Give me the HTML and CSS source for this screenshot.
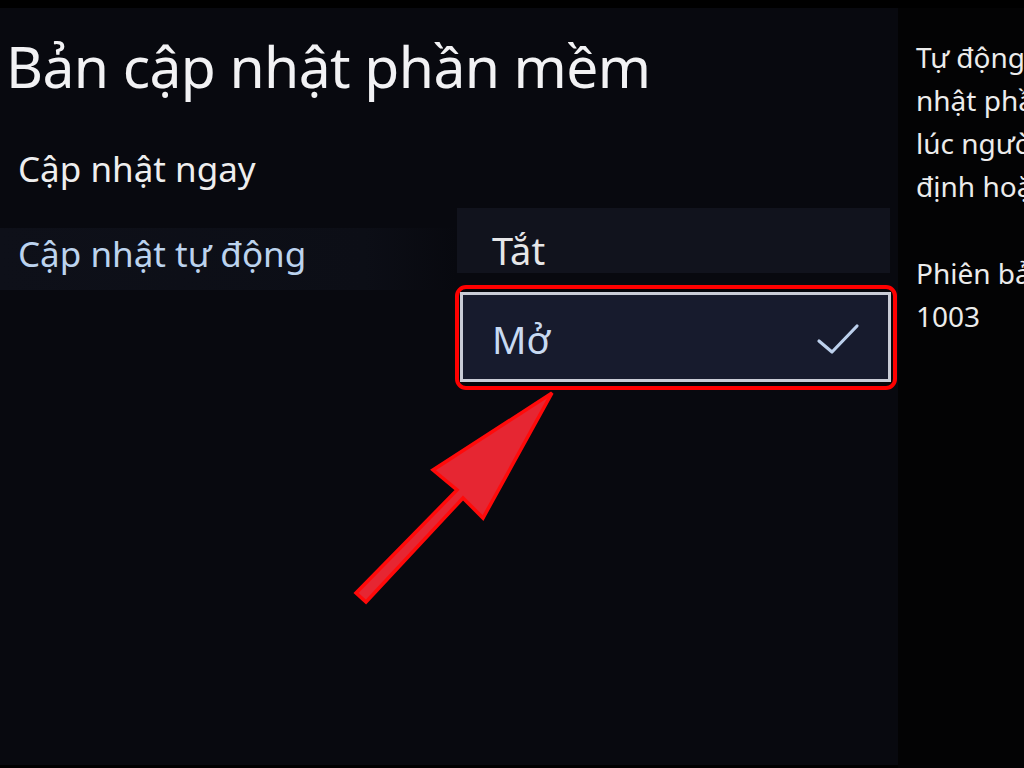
FILE: index.html
```html
<!DOCTYPE html>
<html lang="vi">
<head>
<meta charset="utf-8">
<title>Bản cập nhật phần mềm</title>
<link rel="stylesheet" href="styles.css">
</head>
<body>
<div class="screen">
  <main class="main">
    <h1 class="title">Bản cập nhật phần mềm</h1>
    <div class="content">
      <ul class="menu">
        <li class="menu-item">Cập nhật ngay</li>
        <li class="menu-item menu-item--active">Cập nhật tự động</li>
      </ul>
      <div class="options">
        <div class="option">Tắt</div>
        <div class="option-frame">
          <div class="option option--selected">
            <span class="option-label">Mở</span>
            <svg class="check" width="44" height="32" viewBox="0 0 44 32"><path d="M3 18 L16 29 L41 3" fill="none" stroke="#bcd0ec" stroke-width="3.2" stroke-linecap="round" stroke-linejoin="round"/></svg>
          </div>
        </div>
      </div>
    </div>
  </main>
  <aside class="side">
    <p class="side-text">Tự động cập<br>nhật phần mềm lên<br>lúc người dùng không<br>định hoặc tắt TV.</p>
    <p class="side-text side-version">Phiên bản hiện tại:<br>1003</p>
  </aside>
</div>
<svg class="arrow" width="1024" height="768" viewBox="0 0 1024 768">
  <polygon points="552,393 433,470 457,490 356,593 366,602 463,498 483,518" fill="#e62632" stroke="#ff0a0a" stroke-width="3.5" stroke-linejoin="miter"/>
</svg>
</body>
</html>
```
FILE: styles.css
```css
html, body {
  margin: 0;
  padding: 0;
  background: #000;
}
body {
  width: 1024px;
  height: 768px;
  overflow: hidden;
  position: relative;
  font-family: "Noto Sans", "Open Sans", sans-serif;
}
.screen {
  display: flex;
  height: 768px;
  padding-top: 8px;
  box-sizing: border-box;
}
.main {
  width: 898px;
  height: 757px;
  background: #08090f;
  flex: none;
}
.title {
  margin: 0;
  padding: 22px 0 0 6px;
  font-weight: 400;
  font-size: 57px;
  line-height: 72px;
  color: #f2f2f4;
  letter-spacing: -0.6px;
}
.content {
  display: grid;
  grid-template-columns: 457px 433px;
}
.menu {
  list-style: none;
  margin: 0;
  padding: 41px 0 0 0;
}
.menu-item {
  height: 62px;
  line-height: 52px;
  padding-left: 18px;
  font-size: 35px;
  color: #eeeeee;
  margin-bottom: 23px;
  box-sizing: border-box;
}
.menu-item--active {
  color: #bcd3ee;
  background: linear-gradient(90deg, #0e1019 0%, #0c0e16 80%, rgba(12,14,22,0) 100%);
}
.options {
  padding-top: 106px;
  display: flex;
  flex-direction: column;
}
.option {
  height: 65px;
  line-height: 49px;
  padding: 18px 0 0 35px;
  font-size: 38px;
  color: #e6e6e8;
  background: #11131d;
  box-sizing: border-box;
}
.option-frame {
  margin: 12px -7px 0 -2px;
  border: 4px solid #ff0000;
  border-radius: 11px;
  padding: 3px 2px 4px 1px;
  background: #05060a;
}
.option--selected {
  height: 90px;
  line-height: normal;
  padding: 3px 28px 0 29px;
  border: 3px solid #c9ccd6;
  background: #171b2d;
  color: #c8daf2;
  display: flex;
  justify-content: space-between;
  align-items: center;
}
.option-label {
  display: block;
}
.check {
  display: block;
}
.side {
  flex: 1;
  background: #030304;
  padding-left: 18px;
  overflow: hidden;
}
.side-text {
  margin: 0;
  white-space: nowrap;
  font-size: 28px;
  line-height: 43px;
  color: #ececec;
}
.side-text:first-child {
  margin-top: 28px;
}
.side-version {
  margin-top: 44px;
}
.arrow {
  position: absolute;
  left: 0;
  top: 0;
  pointer-events: none;
}
```
